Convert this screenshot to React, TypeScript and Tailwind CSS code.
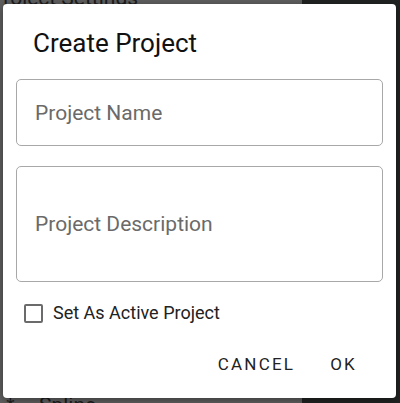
import { useState } from "react";

export default function App() {
  const [name, setName] = useState("");
  const [desc, setDesc] = useState("");
  const [active, setActive] = useState(false);

  return (
    <div className="relative w-[400px] h-[403px] overflow-hidden font-['Roboto',sans-serif]">
      {/* app behind the modal, dimmed */}
      <div className="flex h-full">
        <div className="w-[302px] bg-[#5f5f5f] flex flex-col justify-between">
          <div className="-mt-[12px] -ml-[10px] text-[21px] leading-[20px] text-[#1c1c1c]">Project Settings</div>
          <div className="flex items-center gap-[24px] pl-[6px] -mb-[12px] text-[21px] leading-[20px] text-[#1c1c1c]">
            <span className="text-[16px]">⁑</span>
            <span>Spline</span>
          </div>
        </div>
        <div className="flex-1 bg-[#212322]" />
      </div>

      {/* dialog */}
      <div className="absolute left-[3px] top-[4px] w-[393px] h-[394px] bg-white rounded-[4px] shadow-[0_2px_8px_rgba(0,0,0,0.4)] flex flex-col">
        <h2 className="pl-[30px] pt-[23px] text-[26px] leading-[32px] text-[#111]">Create Project</h2>

        <div className="flex flex-col gap-[20px] px-[13px] mt-[20px]">
          <input
            value={name}
            onChange={(e) => setName(e.target.value)}
            placeholder="Project Name"
            className="h-[67px] w-full rounded-[5px] border border-[#a8a8a8] px-[18px] text-[21px] text-[#222] placeholder:text-[#6a6a6a] outline-none"
          />
          <textarea
            value={desc}
            onChange={(e) => setDesc(e.target.value)}
            placeholder="Project Description"
            className="h-[116px] w-full resize-none rounded-[5px] border border-[#a8a8a8] px-[18px] pt-[43px] text-[21px] leading-[28px] text-[#222] placeholder:text-[#6a6a6a] outline-none"
          />
        </div>

        <label className="flex items-center gap-[10px] pl-[21px] mt-[21px] cursor-pointer">
          <input type="checkbox" checked={active} onChange={(e) => setActive(e.target.checked)} className="sr-only" />
          <span className="w-[19px] h-[19px] rounded-[2px] border-2 border-[#6b6b6b]" />
          <span className="text-[18px] leading-[20px] text-[#222]">Set As Active Project</span>
        </label>

        <div className="flex justify-end items-center gap-[19px] pr-[31px] mt-[23px]">
          <button className="px-[8px] py-[6px] text-[17px] tracking-[0.13em] text-[#222]">CANCEL</button>
          <button className="px-[8px] py-[6px] text-[17px] tracking-[0.13em] text-[#222]">OK</button>
        </div>
      </div>
    </div>
  );
}
